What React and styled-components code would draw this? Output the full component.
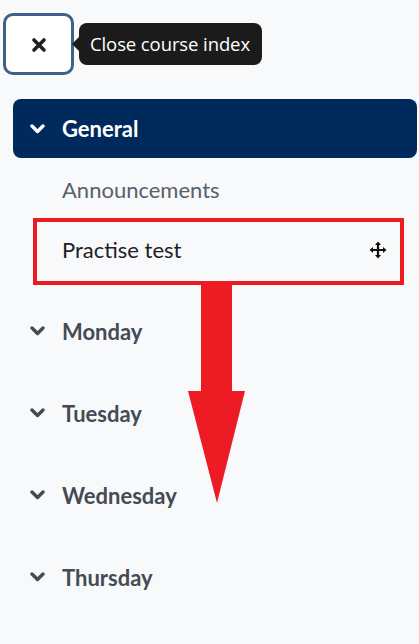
import styled, { createGlobalStyle } from 'styled-components'

const GlobalStyle = createGlobalStyle`
  html, body {
    margin: 0;
    padding: 0;
    background: #f8f9fa;
  }
  body {
    font-family: Lato, "Liberation Sans", sans-serif;
  }
`

const Page = styled.div`
  position: relative;
  width: 419px;
  height: 644px;
  overflow: hidden;
  background: #f8f9fa;
`

const TopBar = styled.div`
  display: flex;
  align-items: center;
  padding: 13px 0 0 3px;
  height: 62px;
`

const CloseButton = styled.button`
  box-sizing: border-box;
  width: 71px;
  height: 62px;
  display: flex;
  align-items: center;
  justify-content: center;
  background: #fff;
  border: 3px solid #3f6183;
  border-radius: 10px;
  padding: 1px 0 0;
  cursor: pointer;
`

const Tooltip = styled.div`
  position: relative;
  margin-left: 5px;
  height: 41px;
  display: flex;
  align-items: center;
  padding: 0 12px 1px 11px;
  background: #1b1b1b;
  color: #fff;
  border-radius: 8px;
  font-family: "Open Sans", "Liberation Sans", sans-serif;
  font-size: 18.5px;
  letter-spacing: -0.1px;
  white-space: nowrap;

  &::before {
    content: '';
    position: absolute;
    left: -7px;
    top: 50%;
    margin-top: -7px;
    border-style: solid;
    border-width: 7px 7px 7px 0;
    border-color: transparent #1b1b1b transparent transparent;
  }
`

const Nav = styled.nav`
  margin: 24px 2px 0 13px;
`

const SectionHeader = styled.div`
  display: flex;
  align-items: center;
  height: ${p => (p.$active ? '59px' : '82px')};
  padding-left: 17px;
  border-radius: 8px;
  background: ${p => (p.$active ? '#002a5c' : 'transparent')};
  color: ${p => (p.$active ? '#fff' : '#444b54')};
  font-size: 22px;
  font-weight: 700;
`

const ChevronWrap = styled.span`
  display: flex;
  width: 15px;
  margin-right: 17px;
`

const Activity = styled.div`
  box-sizing: border-box;
  display: flex;
  align-items: center;
  justify-content: space-between;
  height: ${p => (p.$highlight ? '67px' : '60px')};
  margin-left: 20px;
  margin-right: 13px;
  padding: ${p => (p.$highlight ? '0 13px 4px 25px' : '2px 13px 0 29px')};
  border: ${p => (p.$highlight ? '4px solid #ed1c24' : 'none')};
  color: ${p => (p.$highlight ? '#1d2125' : '#5a6068')};
  font-size: 22px;
`

const SectionList = styled.div`
  margin-top: 5px;
`

const ArrowOverlay = styled.svg`
  position: absolute;
  left: 186px;
  top: 283px;
  pointer-events: none;
`

function Chevron({ color }) {
  return (
    <svg width="15" height="10" viewBox="0 0 15 10">
      <path d="M2 2 L7.5 7.5 L13 2" fill="none" stroke={color} strokeWidth="3.4" strokeLinecap="round" strokeLinejoin="round" />
    </svg>
  )
}

function CloseIcon() {
  return (
    <svg width="16" height="16" viewBox="0 0 16 16">
      <path d="M3 3 L13 13 M13 3 L3 13" stroke="#1d2125" strokeWidth="3.6" strokeLinecap="round" />
    </svg>
  )
}

function MoveIcon() {
  return (
    <svg width="18" height="18" viewBox="0 0 18 18">
      <path d="M9 2.5 V15.5 M2.5 9 H15.5" stroke="#111" strokeWidth="2.2" />
      <path d="M9 0.5 L6 4 H12 Z M9 17.5 L6 14 H12 Z M0.5 9 L4 6 V12 Z M17.5 9 L14 6 V12 Z" fill="#111" />
    </svg>
  )
}

const sections = ['Monday', 'Tuesday', 'Wednesday', 'Thursday']

export default function App() {
  return (
    <Page>
      <GlobalStyle />
      <TopBar>
        <CloseButton aria-label="Close course index">
          <CloseIcon />
        </CloseButton>
        <Tooltip>Close course index</Tooltip>
      </TopBar>

      <Nav>
        <SectionHeader $active>
          <ChevronWrap><Chevron color="#fff" /></ChevronWrap>
          General
        </SectionHeader>
        <Activity>Announcements</Activity>
        <Activity $highlight>
          Practise test
          <MoveIcon />
        </Activity>

        <SectionList>
          {sections.map(name => (
            <SectionHeader key={name}>
              <ChevronWrap><Chevron color="#444b54" /></ChevronWrap>
              {name}
            </SectionHeader>
          ))}
        </SectionList>
      </Nav>

      {/* annotation arrow drawn over the list */}
      <ArrowOverlay width="62" height="222" viewBox="0 0 62 222">
        <rect x="15" y="0" width="31" height="110" fill="#ed1c24" />
        <polygon points="2,108 59,108 31,220" fill="#ed1c24" />
      </ArrowOverlay>
    </Page>
  )
}
